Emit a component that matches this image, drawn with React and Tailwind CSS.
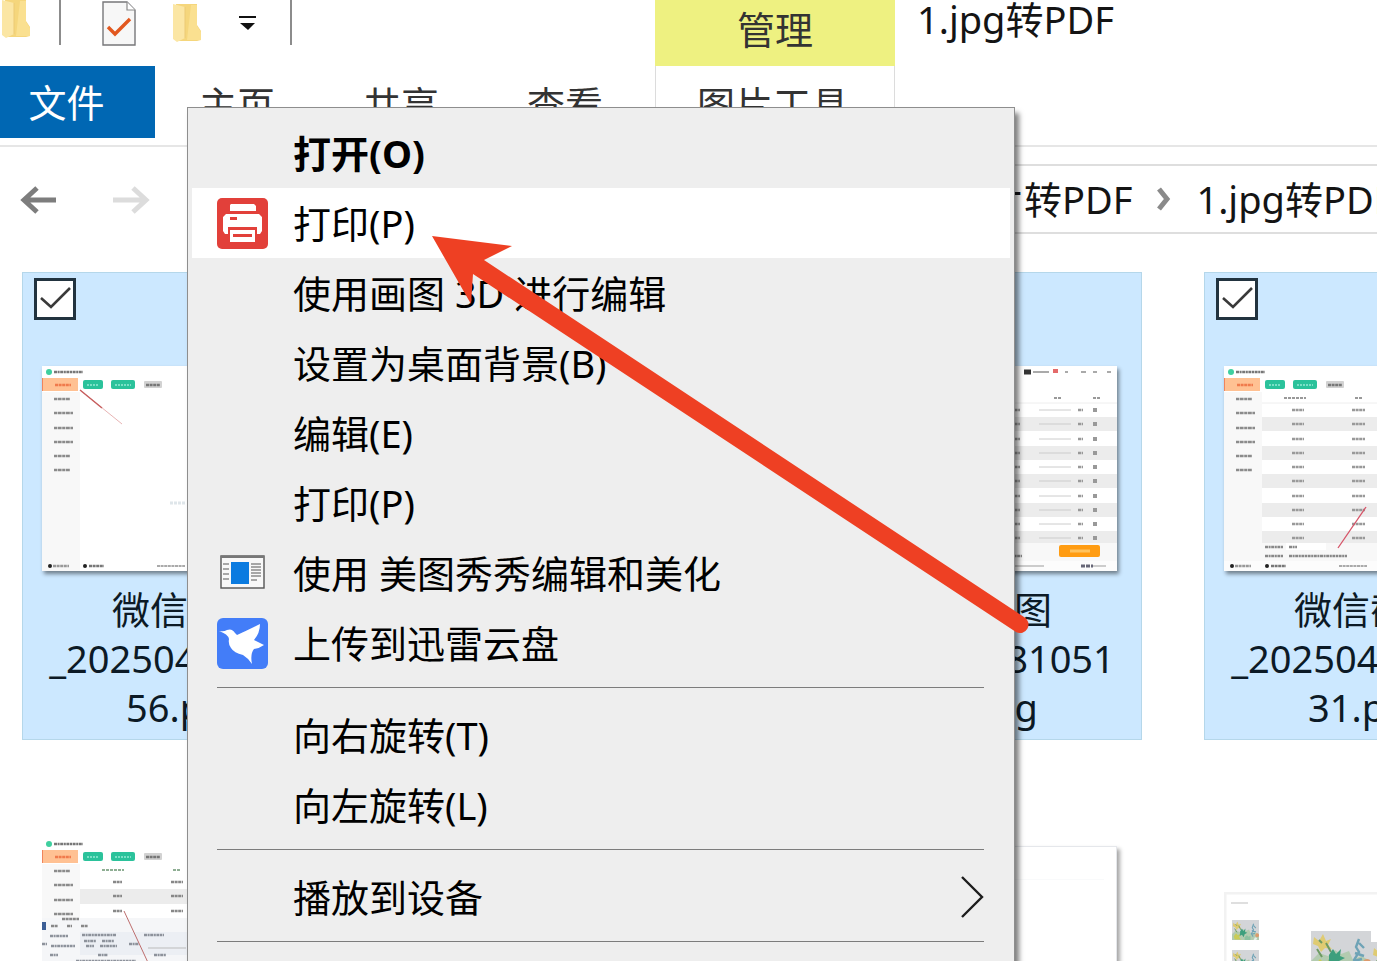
import { Fragment, useState } from 'react';

const SIDE_ROWS = [33, 47, 62, 76, 90, 104];
const TABLE_ROWS = [44, 58, 73, 87, 101, 115, 130, 144, 158, 172];

const FILES = [
  { id: 1, lines: ['微信截图', '_202504181050', '56.png'], art: 'empty' },
  { id: 2, lines: ['微信截图', '_202504181051', '04.png'], art: 'table' },
  { id: 3, lines: ['微信截图', '_202504181051', '09.png'], art: 'table' },
  { id: 4, lines: ['微信截图', '_202504181051', '31.png'], art: 'table' },
];

const MORE_FILES = [
  { id: 5, art: 'dialog' },
  { id: 6, art: 'page' },
  { id: 7, art: 'page' },
  { id: 8, art: 'photos' },
];

const MENU_GROUPS = [
  [
    { label: '打开(O)', bold: true },
    { label: '打印(P)', icon: 'printer', active: true },
    { label: '使用画图 3D 进行编辑' },
    { label: '设置为桌面背景(B)' },
    { label: '编辑(E)' },
    { label: '打印(P)' },
    { label: '使用 美图秀秀编辑和美化', icon: 'picture' },
    { label: '上传到迅雷云盘', icon: 'bird' },
  ],
  [{ label: '向右旋转(T)' }, { label: '向左旋转(L)' }],
  [{ label: '播放到设备', submenu: true }],
];

function FolderIcon() {
  return (
    <svg width="32" height="48" viewBox="0 0 32 48" aria-hidden="true">
      <path d="M5 4h21v21l4 6v9l-4 1H6l-2-2z" fill="#f5d67c" />
      <path d="M20 5h6v21l4 6v8H16z" fill="#fae090" />
      <path d="M2 4l12 3v31l-8 4-4-3z" fill="#fbe6a4" />
      <path d="M14 7v31" stroke="#ecca74" strokeWidth="1" />
    </svg>
  );
}

function DocCheckIcon() {
  return (
    <svg width="34" height="46" viewBox="0 0 34 46" fill="none" aria-hidden="true">
      <path d="M1 2h24l8 8v35H1z" fill="#f7f7f7" stroke="#77777a" strokeWidth="1.4" />
      <path d="M25 2v8h8" fill="#fff" stroke="#8a8a8a" strokeWidth="1.2" />
      <path d="M6 27l7 7 15-15" stroke="#e2581f" strokeWidth="3.4" />
    </svg>
  );
}

function PrinterIcon() {
  return (
    <svg width="51" height="51" viewBox="0 0 51 51" aria-hidden="true">
      <rect width="51" height="51" rx="5" fill="#e2403a" />
      <path d="M14 6h23l2 2v5H13V7z" fill="#fff" />
      <path d="M9 16h33l3 3v14l-2 3h-3v-7H11v7H8l-2-3V19z" fill="#fff" />
      <path d="M13 19h7v3h-7z" fill="#e2403a" />
      <path d="M13 32h25v12H13z" fill="#fff" />
      <path d="M16 36h19v3H16z" fill="#e2403a" />
    </svg>
  );
}

function PictureIcon() {
  return (
    <svg width="51" height="51" viewBox="0 0 51 51" aria-hidden="true">
      <rect x="4" y="8" width="43" height="32" fill="#f8f8f8" stroke="#555" strokeWidth="1.4" />
      <path d="M4 9h43" stroke="#777" strokeWidth="2" />
      <rect x="14" y="14" width="18" height="22" fill="#0b7be0" />
      <path
        d="M6 16h6M6 21h6M6 26h6M6 31h6M34 16h10M34 19h10M34 22h10M34 25h10M34 28h10M34 32h6"
        stroke="#8c8c8c"
        strokeWidth="1.3"
      />
    </svg>
  );
}

function BirdIcon() {
  return (
    <svg width="51" height="51" viewBox="0 0 51 51" aria-hidden="true">
      <rect width="51" height="51" rx="6" fill="#437df8" />
      <path
        d="M2 13Q7 14 10 12Q15 10 18 15L20 17Q31 12 43 6Q43 15 37 22Q41 24 47 27Q43 30 37 31Q33 36 35 46Q31 40 26 37Q17 35 14 30Q11 26 12 21Q11 16 2 13Z"
        fill="#fff"
      />
    </svg>
  );
}

const ICONS = { printer: PrinterIcon, picture: PictureIcon, bird: BirdIcon };

function NavArrow({ forward }) {
  return (
    <svg width="38" height="30" viewBox="0 0 38 30" fill="none" aria-hidden="true">
      {forward ? (
        <path d="M1 15h33M21 3l13 12-13 12" stroke="#dcdcdc" strokeWidth="5" />
      ) : (
        <path d="M36 15H4M17 3L4 15l13 12" stroke="#7d7d7d" strokeWidth="5" />
      )}
    </svg>
  );
}

// shared header and sidebar of the app window seen in every preview
function AppChrome({ rows = SIDE_ROWS }) {
  return (
    <>
      <rect width="287" height="205" fill="#fff" />
      <rect y="26" width="38" height="179" fill="#f8f8f8" />
      <circle cx="7" cy="6" r="3" fill="#3fcf9f" />
      <path d="M12 6h29" stroke="#777" strokeWidth="2.4" strokeDasharray="3 0.6 2 0.6" />
      <rect y="12" width="36" height="13" fill="#ffc193" />
      <path d="M0 12v13" stroke="#f0845c" strokeWidth="2" />
      <path d="M13 19h16" stroke="#f07a4c" strokeWidth="2.4" strokeDasharray="3 0.6" />
      <rect x="41" y="14" width="20" height="9" rx="2" fill="#2bc29b" />
      <path d="M45 19h12" stroke="#7ae0c6" strokeWidth="2" strokeDasharray="2 1" />
      <rect x="69" y="14" width="24" height="9" rx="2" fill="#2bc29b" />
      <path d="M73 19h16" stroke="#7ae0c6" strokeWidth="2" strokeDasharray="2 1" />
      <rect x="102" y="15" width="18" height="7" rx="1" fill="#d2d2d2" />
      <path d="M104 19h14" stroke="#777" strokeWidth="2.4" strokeDasharray="3 0.6" />
      {rows.map((y, i) => (
        <path
          key={y}
          d={`M12 ${y}h${i > 0 && i < 4 ? 19 : 16}`}
          stroke="#8b8b8b"
          strokeWidth="2.4"
          strokeDasharray="3 0.6 4 0.6"
        />
      ))}
    </>
  );
}

function Footer() {
  return (
    <g>
      <circle cx="8" cy="200" r="2" fill="#222" />
      <path d="M11 200h16" stroke="#999" strokeWidth="2.4" strokeDasharray="3 0.6" />
      <circle cx="43" cy="200" r="2" fill="#222" />
      <path d="M47 200h15" stroke="#777" strokeWidth="2.4" strokeDasharray="3 0.6" />
      <path d="M115 200h28" stroke="#aaa" strokeWidth="2" strokeDasharray="3 0.6" />
    </g>
  );
}

function EmptyArt() {
  return (
    <>
      <AppChrome />
      <path d="M38 24l42 34" stroke="#e8b4b4" strokeWidth="1" />
      <path d="M38 24l22 18" stroke="#c65d5d" strokeWidth="1.4" />
      <path d="M128 137h16" stroke="#dfe6ea" strokeWidth="3" strokeDasharray="3 1" />
      <Footer />
    </>
  );
}

function TableArt() {
  return (
    <>
      <AppChrome />
      <path d="M60 32h22M131 32h8M224 32h8M263 32h7" stroke="#999" strokeWidth="2" strokeDasharray="3 1" />
      {TABLE_ROWS.map((y, i) => (
        <g key={y}>
          <rect x="38" y={y - 7} width="249" height="14" fill={i % 2 ? '#ececec' : '#fff'} />
          <path d={`M68 ${y}h12M128 ${y}h13M181 ${y}h9M248 ${y}h5`} stroke="#999" strokeWidth="2.4" strokeDasharray="3 0.6" />
          <path d={`M209 ${y}h32`} stroke="#ccc" strokeWidth="1" />
          <path d={`M263 ${y}h4`} stroke="#999" strokeWidth="4" />
        </g>
      ))}
      <path d="M38 37h249" stroke="#eee" strokeWidth="1" />
      <rect x="38" y="177" width="249" height="28" fill="#f8f8f8" />
      <rect x="62" y="177" width="40" height="7" fill="#fff" />
      <path d="M41 181h18M65 181h8M41 190h18M65 190h58M181 190h11" stroke="#888" strokeWidth="2.4" strokeDasharray="3 0.6 2 0.6" />
      <rect x="229" y="179" width="41" height="12" rx="2" fill="#ff9c12" />
      <path d="M240 185h20" stroke="#ffc35e" strokeWidth="3" />
      <rect y="195" width="287" height="10" fill="#fcfcfc" />
      <Footer />
      <path d="M180 200h34M262 200h14" stroke="#ccc" strokeWidth="2" />
      <path d="M251 200h12" stroke="#667" strokeWidth="3" strokeDasharray="4 1" />
      <path d="M194 6h7" stroke="#333" strokeWidth="5" />
      <path d="M203 6h16" stroke="#aaa" strokeWidth="2" />
      <path d="M223 5h5" stroke="#e46a6a" strokeWidth="4" />
      <path d="M235 6h3M251 6h5M263 6h4M277 6h4" stroke="#aaa" strokeWidth="2" />
      <path d="M114 182l28-41" stroke="#d65468" strokeWidth="1.3" />
    </>
  );
}

function DialogArt() {
  return (
    <>
      <AppChrome rows={[33, 47, 62, 76]} />
      <path d="M60 32h22M131 32h8" stroke="#8fae94" strokeWidth="2" strokeDasharray="3 1" />
      <rect x="38" y="51" width="249" height="15" fill="#ececec" />
      {[44, 58, 73].map((y) => (
        <path key={y} d={`M71 ${y}h9M129 ${y}h12`} stroke="#888" strokeWidth="2.4" strokeDasharray="3 0.6" />
      ))}
      <rect y="80" width="287" height="125" fill="#f5f6f8" />
      <rect y="84" width="4" height="8" fill="#3d5f96" />
      <path d="M20 81h17M9 88h7M25 88h5M39 88h7" stroke="#888" strokeWidth="2.4" strokeDasharray="3 0.6" />
      <rect x="38" y="94" width="249" height="23" fill="#eceff4" />
      <path
        d="M8 98h18M40 97h34M102 97h20M0 106h5M9 108h24M42 103h12M60 103h12M44 108h8M58 108h17M87 106h10M8 117h8M56 117h10M112 117h12M34 123h60"
        stroke="#8d929b"
        strokeWidth="2.4"
        strokeDasharray="3 0.6 2 0.6"
      />
      <path d="M106 110h38" stroke="#bbb" strokeWidth="1" />
      <path d="M82 73l27 58" stroke="#bd6d6d" strokeWidth="1" />
    </>
  );
}

function Bouquet({ x, y, w, h }) {
  return (
    <svg x={x} y={y} width={w} height={h} viewBox="0 0 60 42" preserveAspectRatio="none">
      <rect width="60" height="42" fill="#d3d5d8" />
      <path d="M0 30l8-8 9 3 7-6 6 4 8-3 4 9 8-4 10 5v12H0z" fill="#b3cbb0" />
      <path d="M3 6l5 4 4-7 3 7 5-2-3 6 4 4-7-1-4 4-3-6-5-2z" fill="#dfcb72" />
      <path d="M8 9l3 3M15 12l5 9M6 18l5 8" stroke="#6d9a62" strokeWidth="2" />
      <path d="M18 24l4-6 3 5 5-5-1 7 5 2-6 3-2 6-4-5-6 3 2-6z" fill="#3d9f7d" />
      <path d="M4 34l5-6 4 4 5-3-2 7 4 5H6z" fill="#c9cc57" />
      <path d="M28 36l5-4 4 3 4-2v9H28z" fill="#8dc0a0" />
      <path d="M48 8l-3 8 3 5-5 8 4 6M48 12l5 5M44 22l9 3M43 30l8-2" stroke="#6ea3b6" strokeWidth="2.4" fill="none" />
      <circle cx="56" cy="32" r="4" fill="#dd9a6c" />
      <path d="M51 36l5 2-2 4h-6z" fill="#e4efe8" />
    </svg>
  );
}

function Thumbnail({ art }) {
  if (art === 'page') {
    return (
      <div className="mt-[8px] h-[197px] w-[287px] border border-gray-200 bg-white shadow-[3px_3px_4px_rgba(0,0,0,0.35)]">
        <div className="mx-3 mt-8 h-px bg-gray-50" />
      </div>
    );
  }
  if (art === 'photos') {
    return (
      <svg className="mt-[54px]" width="287" height="150" viewBox="0 0 287 150" aria-hidden="true">
        <rect x="1" y="1" width="285" height="148" fill="#fff" stroke="#f2f2f2" strokeWidth="3" />
        <path d="M7 11h17" stroke="#d4d4d4" strokeWidth="1.5" />
        <Bouquet x="8" y="28" w="27" h="20" />
        <Bouquet x="8" y="58" w="27" h="20" />
        <Bouquet x="87" y="39" w="60" h="42" />
        <Bouquet x="147" y="50" w="60" h="42" />
      </svg>
    );
  }
  return (
    <svg
      className={art === 'dialog' ? '' : 'shadow-[2px_3px_4px_rgba(0,0,0,0.45)]'}
      width="287"
      height="205"
      viewBox="0 0 287 205"
      aria-hidden="true"
    >
      {art === 'empty' && <EmptyArt />}
      {art === 'table' && <TableArt />}
      {art === 'dialog' && <DialogArt />}
    </svg>
  );
}

function FileTile({ file, selected, onToggle }) {
  return (
    <div className={`h-[468px] w-[332px] shrink-0 border ${selected ? 'border-[#b5d7ea] bg-[#cce8ff]' : 'border-transparent'}`}>
      <div className="h-[93px] px-[11px] pt-[5px]">
        {file.lines && (
          <label className="relative block size-[42px]">
            <input
              type="checkbox"
              aria-label={file.lines.join('')}
              checked={selected}
              onChange={onToggle}
              className="block size-[42px] appearance-none border-3 border-[#22333f] bg-white"
            />
            {selected && (
              <svg className="pointer-events-none absolute inset-0" width="42" height="42" viewBox="0 0 42 42" fill="none">
                <path d="M7 20l10 9 19-19" stroke="#3a3a3a" strokeWidth="2.6" />
              </svg>
            )}
          </label>
        )}
      </div>
      <div className="flex justify-center pr-[6px]">
        <Thumbnail art={file.art} />
      </div>
      {file.lines && (
        <p className="mt-[14px] text-center leading-[49px]">
          {file.lines.map((line) => (
            <span key={line} className="block">{line}</span>
          ))}
        </p>
      )}
    </div>
  );
}

function MenuItem({ item }) {
  const Icon = ICONS[item.icon];
  return (
    <button
      type="button"
      role="menuitem"
      className={`flex h-[70px] w-full items-center pl-[25px] pr-[26px] text-left ${item.active ? 'bg-white' : ''} ${item.bold ? 'font-bold' : ''}`}
    >
      <span className="w-[76px] shrink-0">{Icon && <Icon />}</span>
      <span className="grow whitespace-nowrap">{item.label}</span>
      {item.submenu && (
        <svg width="24" height="44" viewBox="0 0 24 44" fill="none" aria-hidden="true">
          <path d="M2 2l20 20L2 42" stroke="#1c1c1c" strokeWidth="2.4" />
        </svg>
      )}
    </button>
  );
}

function ContextMenu() {
  return (
    <div
      role="menu"
      className="absolute top-[107px] bottom-0 left-[187px] w-[828px] overflow-hidden border border-b-0 border-[#8e8e8e] bg-[#eeeeee] px-[4px] pt-[10px] text-black shadow-[4px_6px_5px_rgba(0,0,0,0.5)]"
    >
      {MENU_GROUPS.map((group) => (
        <Fragment key={group[0].label}>
          {group.map((item, i) => (
            <MenuItem key={i} item={item} />
          ))}
          <hr className="mt-[9px] mr-[26px] mb-[12px] ml-[25px] border-t border-[#7c7c7c]" />
        </Fragment>
      ))}
    </div>
  );
}

function App() {
  const [selected, setSelected] = useState([1, 2, 3, 4]);

  const toggle = (id) => {
    setSelected(selected.includes(id) ? selected.filter((s) => s !== id) : [...selected, id]);
  };

  return (
    <div className="relative h-screen overflow-hidden bg-white font-['Noto_Sans','Noto_Sans_CJK_SC',sans-serif] text-[38px] leading-[50px] text-[#141414]">
      <header className="flex h-[66px]">
        <div className="flex w-[655px] shrink-0 items-start">
          <button type="button" aria-label="文件夹" className="-mt-1 w-[59px]"><FolderIcon /></button>
          <span className="h-[45px] w-[2px] bg-[#8c8c8c]" />
          <button type="button" aria-label="属性" className="ml-[41px]"><DocCheckIcon /></button>
          <button type="button" aria-label="新建文件夹" className="ml-[35px]"><FolderIcon /></button>
          <button type="button" aria-label="自定义快速访问工具栏" className="mt-[14px] ml-[36px]">
            <svg width="18" height="20" viewBox="0 0 18 20" aria-hidden="true">
              <path d="M0 3h17" stroke="#111" strokeWidth="2" />
              <path d="M1 9h15l-7 7z" fill="#111" />
            </svg>
          </button>
          <span className="ml-[33px] h-[45px] w-[2px] bg-[#8c8c8c]" />
        </div>
        <button type="button" className="w-[240px] shrink-0 bg-[#eef181] pb-2 text-[#333]">管理</button>
        <h1 className="ml-[22px] -mt-[6px] whitespace-nowrap">1.jpg转PDF</h1>
      </header>

      <nav className="flex h-[81px] border-b-2 border-[#e6e6e6] text-[#333]">
        <button type="button" className="h-[72px] w-[155px] shrink-0 bg-[#0067b3] pr-[22px] text-white">文件</button>
        <div className="flex h-[76px] w-[500px] shrink-0 gap-[88px] pl-[44px]">
          <button type="button">主页</button>
          <button type="button">共享</button>
          <button type="button">查看</button>
        </div>
        <button type="button" className="h-[76px] w-[240px] shrink-0 border-x border-[#dcdcdc] pr-[4px]">图片工具</button>
      </nav>

      <div className="flex h-[125px] items-start pt-[17px]">
        <button type="button" aria-label="后退" className="mt-[21px] ml-[20px]"><NavArrow /></button>
        <button type="button" aria-label="前进" className="mt-[21px] ml-[54px]"><NavArrow forward /></button>
        <div className="ml-[50px] flex h-[70px] grow items-center overflow-hidden border-y-2 border-l-2 border-[#dedede] pl-[746px] whitespace-nowrap">
          <a href="#parent">图片转PDF</a>
          <svg className="mx-[22px] shrink-0" width="20" height="26" viewBox="0 0 20 26" fill="none" aria-hidden="true">
            <path d="M5 3l8 10-8 10" stroke="#8a8a8a" strokeWidth="5" />
          </svg>
          <a href="#current">1.jpg转PDF</a>
        </div>
      </div>

      <main className="flex flex-col gap-[4px] pl-[22px] text-[#0c1a26]">
        <div className="flex gap-[62px]">
          {FILES.map((file) => (
            <FileTile key={file.id} file={file} selected={selected.includes(file.id)} onToggle={() => toggle(file.id)} />
          ))}
        </div>
        <div className="flex gap-[62px]">
          {MORE_FILES.map((file) => (
            <FileTile key={file.id} file={file} selected={false} />
          ))}
        </div>
      </main>

      <ContextMenu />

      <svg
        className="pointer-events-none absolute top-[230px] left-[430px]"
        width="605"
        height="410"
        viewBox="430 230 605 410"
        aria-hidden="true"
      >
        <path d="M432 236L512 246L484 260L1024 617A8 8 0 0 1 1016 632L473 274L471 304Z" fill="#ee4023" />
      </svg>
    </div>
  );
}

export default App;
